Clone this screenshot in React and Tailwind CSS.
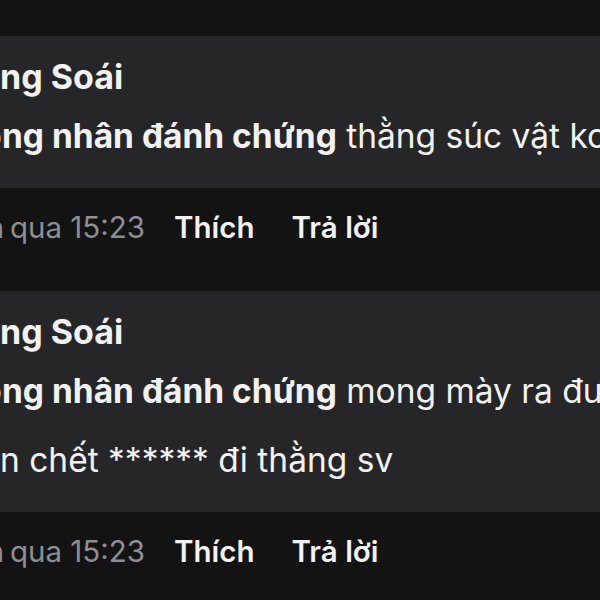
import React from "react";

// the screenshot is a crop: each line keeps its hidden head to the left of the edge
function Cut({ head, children, className = "" }) {
  return (
    <div className={`flex whitespace-nowrap ${className}`}>
      <span className="inline-flex w-0 justify-end">{head}</span>
      <span>{children}</span>
    </div>
  );
}

function Actions() {
  return (
    <div className="flex h-[78px] items-center whitespace-nowrap text-[29.5px] leading-[36px]">
      <Cut head="Hôm" className="pl-[4px] text-[#8e8f94]">
        <span className="pl-[6px]">qua 15:23</span>
      </Cut>
      <span className="ml-[29px] font-semibold text-[#f2f2f2]">Thích</span>
      <span className="ml-[37px] font-semibold text-[#f2f2f2]">Trả lời</span>
    </div>
  );
}

function Comment({ lines }) {
  return (
    <div className="w-[900px] rounded-r-[36px] bg-[#262628] pt-[19px] pb-[17px] text-[#f2f2f2]">
      <Cut head="Hoà" className="text-[34px] font-bold leading-[44px]">
        ng Soái
      </Cut>
      <div className="mt-[3px] text-[33.5px] leading-[69px]">{lines}</div>
    </div>
  );
}

export default function App() {
  return (
    <div
      className="h-[600px] w-[600px] overflow-hidden bg-[#131313] pt-[36px]"
      style={{ fontFamily: "Inter, 'Noto Sans', sans-serif" }}
    >
      <Comment
        lines={
          <Cut head="Đo" className="pl-[2px]">
            <b className="font-bold">ng nhân đánh chứng</b> thằng súc vật ko biết điều
          </Cut>
        }
      />
      <Actions />
      <div className="h-[25px]" />
      <Comment
        lines={
          <>
            <Cut head="Đo" className="pl-[2px]">
              <b className="font-bold">ng nhân đánh chứng</b> mong mày ra đường bị xe
            </Cut>
            <Cut head="cá">n chết ****** đi thằng sv</Cut>
          </>
        }
      />
      <Actions />
    </div>
  );
}
